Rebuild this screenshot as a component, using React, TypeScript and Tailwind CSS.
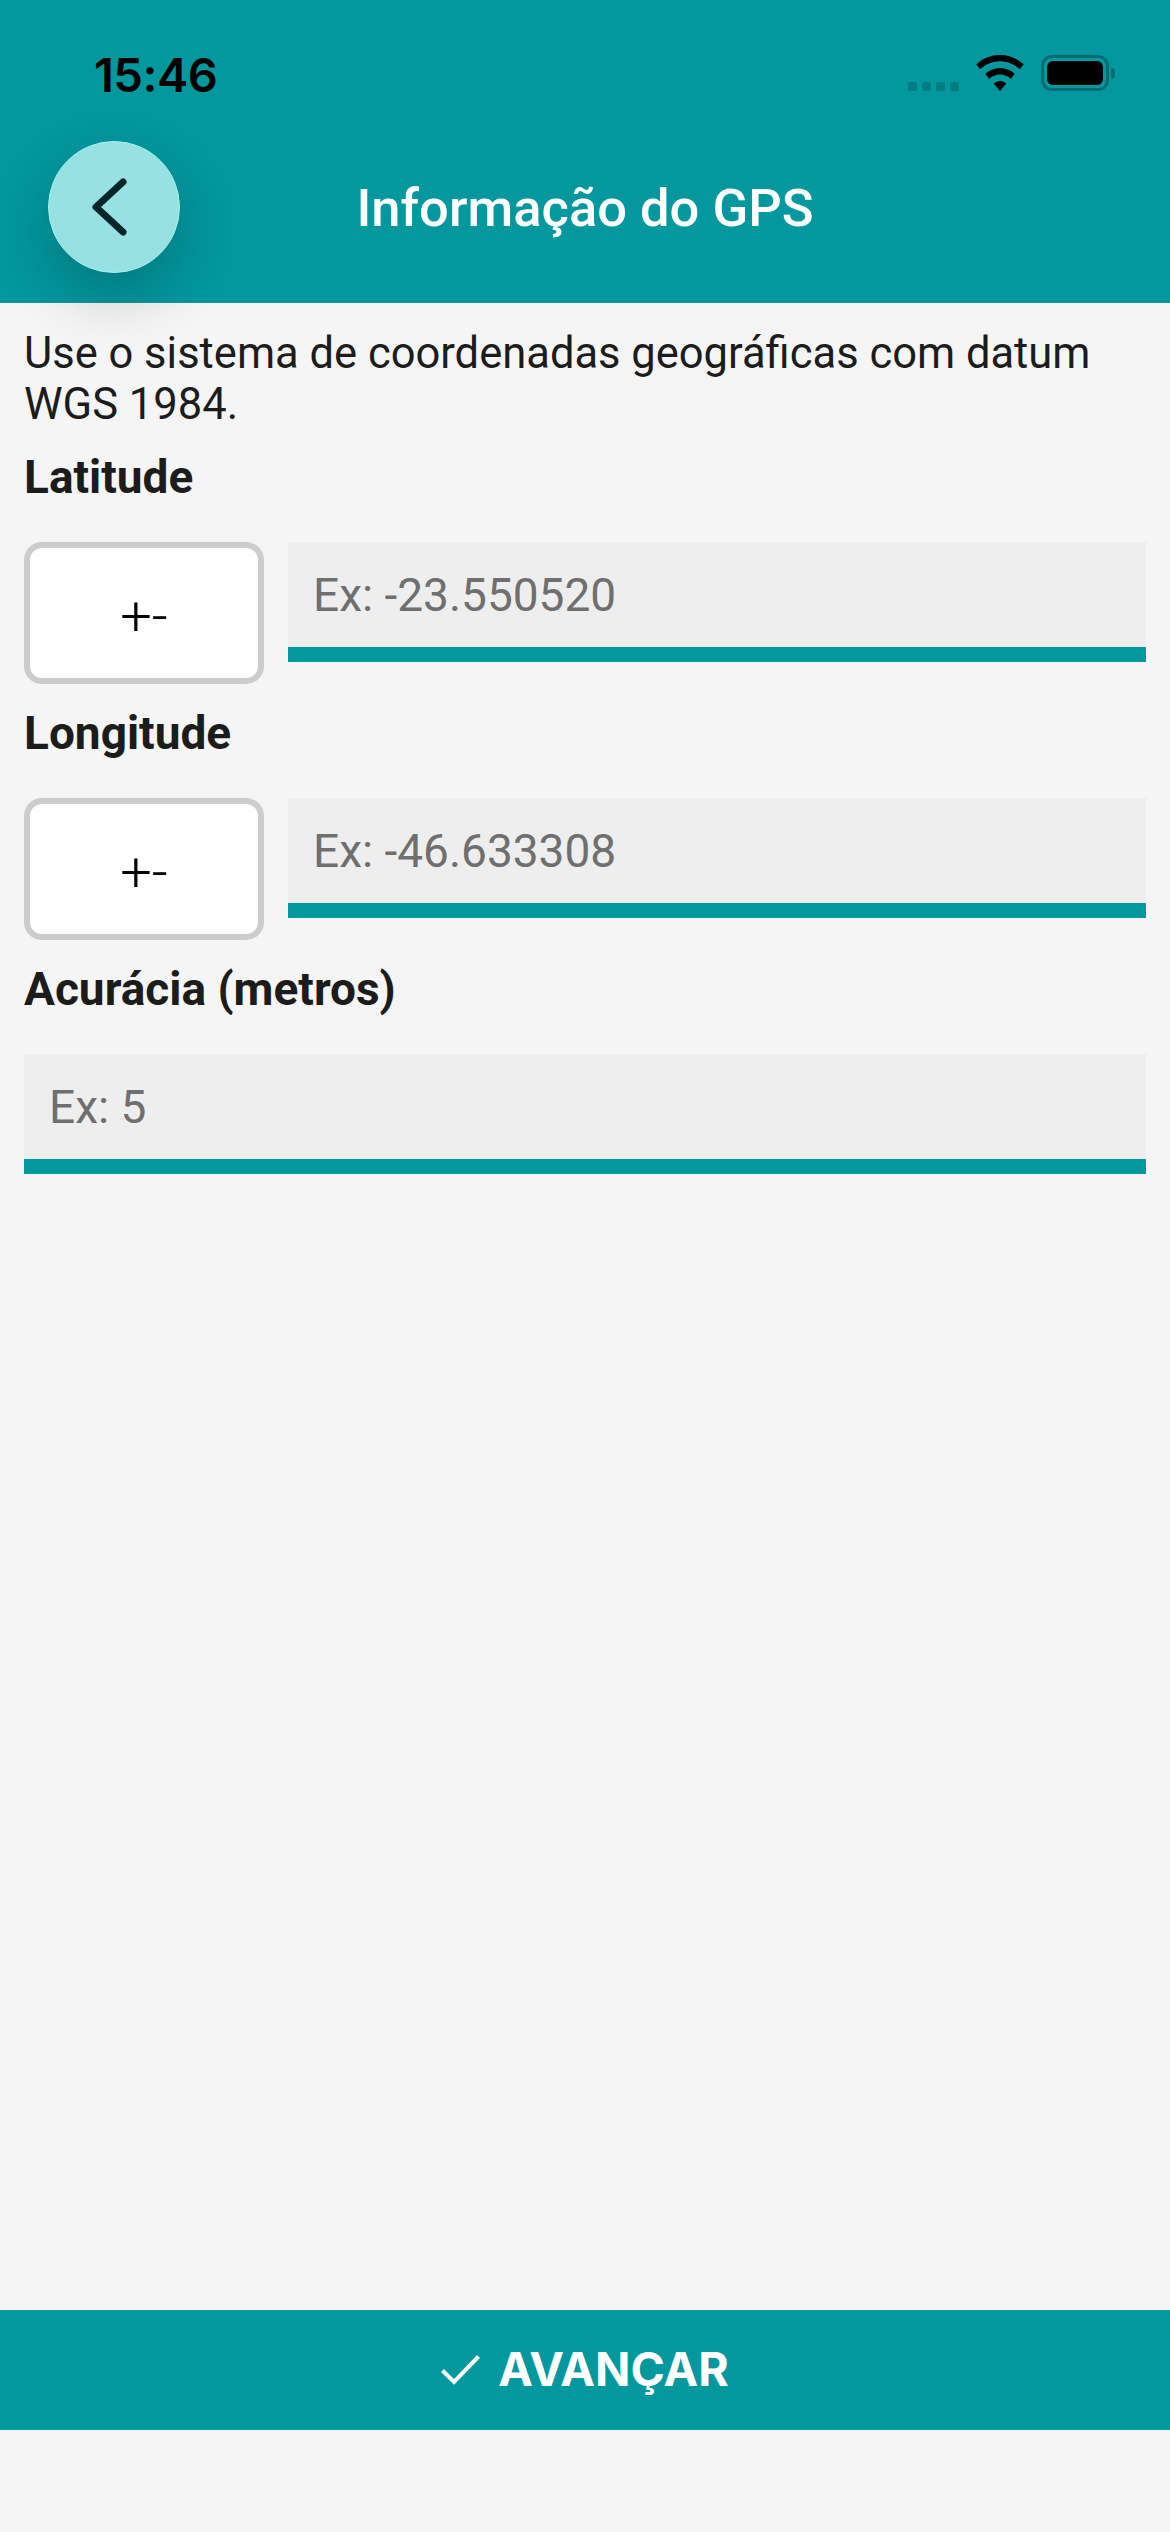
import React from "react";

const font = { fontFamily: "Roboto, sans-serif" };

function Wifi() {
  return (
    <svg width="48" height="36" viewBox="0 0 48 36" fill="none">
      <path d="M24 0C15 0 6.800 3.400 0.300 9.300L4.100 14.300C9.500 9.300 16.400 6.200 24 6.200C31.600 6.200 38.500 9.300 43.900 14.300L47.700 9.300C41.200 3.400 33 0 24 0Z" fill="#000" />
      <path d="M24 13C18.500 13 13.400 15.100 9.300 18.800L13.200 23.900C16 21.200 19.800 19.500 24 19.500C28.200 19.500 32 21.200 34.800 23.900L38.700 18.800C34.600 15.100 29.500 13 24 13Z" fill="#000" />
      <path d="M24 26C21.600 26 19.400 27 17.700 28.500L24 36L30.300 28.500C28.600 27 26.400 26 24 26Z" fill="#000" />
    </svg>
  );
}

function Signal() {
  return (
    <div className="flex gap-[5px] pt-[27px]">
      <div className="w-[9px] h-[9px] rounded-[2px] bg-[#027b81]" />
      <div className="w-[9px] h-[9px] rounded-[2px] bg-[#027b81]" />
      <div className="w-[9px] h-[9px] rounded-[2px] bg-[#027b81]" />
      <div className="w-[9px] h-[9px] rounded-[2px] bg-[#027b81]" />
    </div>
  );
}

function Battery() {
  return (
    <div className="flex items-center">
      <div className="w-[68px] h-[36px] rounded-[11px] border-[3px] border-[#026c72] p-[3px]">
        <div className="w-full h-full rounded-[6px] bg-black" />
      </div>
      <div className="ml-[2px] w-[4px] h-[11px] rounded-r-[4px] bg-[#026c72]" />
    </div>
  );
}

function Label({ children }: { children: React.ReactNode }) {
  return <div className="h-[69px] pt-[4px] text-[46px] leading-[50px] font-bold text-[#1c1c1c]">{children}</div>;
}

function Field({ text, className }: { text: string; className?: string }) {
  return (
    <div className={`h-[120px] bg-[#eeeeee] border-b-[15px] border-[#03979e] pl-[25px] pt-[23px] text-[46px] leading-[60px] text-[#6f6f6f] ${className ?? ""}`}>
      {text}
    </div>
  );
}

function Sign() {
  return (
    <div className="w-[240px] h-[142px] shrink-0 rounded-[18px] border-[6px] border-[#cccccc] bg-white flex items-center justify-center pt-[6px] text-[56px] leading-none font-light text-black">
      +-
    </div>
  );
}

function SignedRow({ label, text }: { label: string; text: string }) {
  return (
    <div className="h-[256px] flex flex-col">
      <Label>{label}</Label>
      <div className="flex gap-[24px] items-start mt-[25px]">
        <Sign />
        <Field text={text} className="flex-1" />
      </div>
    </div>
  );
}

export default function App() {
  return (
    <div className="w-[1170px] h-[2532px] bg-[#f5f5f5] flex flex-col" style={font}>
      <header className="h-[303px] bg-[#03979e] shrink-0 flex flex-col">
        <div className="h-[141px] flex items-start pt-[55px]">
          <div className="w-[908px] pl-[94px] text-[47px] leading-[40px] font-semibold text-black" style={{ fontFamily: "Inter, sans-serif", letterSpacing: "-0.5px" }}>
            15:46
          </div>
          <Signal />
          <div className="ml-[17px]"><Wifi /></div>
          <div className="ml-[17px]"><Battery /></div>
        </div>
        <div className="grid grid-cols-[1fr_auto_1fr] items-start">
          <div className="ml-[48px] w-[132px] h-[132px] rounded-full bg-[#97e1e3] border border-[#a5f0ef] flex items-center justify-center shadow-[0_24px_60px_rgba(0,0,0,0.2)]">
            <svg width="40" height="64" viewBox="0 0 40 64" fill="none" className="mr-[8px]">
              <path d="M33 7L6 32L33 57" stroke="#03262b" strokeWidth="7" strokeLinecap="round" strokeLinejoin="round" />
            </svg>
          </div>
          <div className="text-[52.5px] leading-[135px] font-medium text-white">Informação do GPS</div>
          <div />
        </div>
      </header>
      <main className="flex-1 flex flex-col">
        <div className="flex-1 flex flex-col px-[24px]">
          <p className="pt-[25px] h-[145px] text-[43.5px] leading-[51px] text-[#1c1c1c]">
            Use o sistema de coordenadas geográficas com datum WGS 1984.
          </p>
          <SignedRow label="Latitude" text="Ex: -23.550520" />
          <SignedRow label="Longitude" text="Ex: -46.633308" />
          <Label>Acurácia (metros)</Label>
          <div className="mt-[25px]">
            <Field text="Ex: 5" />
          </div>
        </div>
        <button className="h-[120px] w-full bg-[#03979e] flex items-center justify-center gap-[18px] text-white text-[46.5px] font-bold mb-[102px]" style={{ fontFamily: "Inter, sans-serif" }}>
          <svg width="39" height="30" viewBox="0 0 39 30" fill="none">
            <path d="M1.500 15.500L13 27L37.500 1.500" stroke="#fff" strokeWidth="4" />
          </svg>
          <span>AVANÇAR</span>
        </button>
      </main>
    </div>
  );
}
